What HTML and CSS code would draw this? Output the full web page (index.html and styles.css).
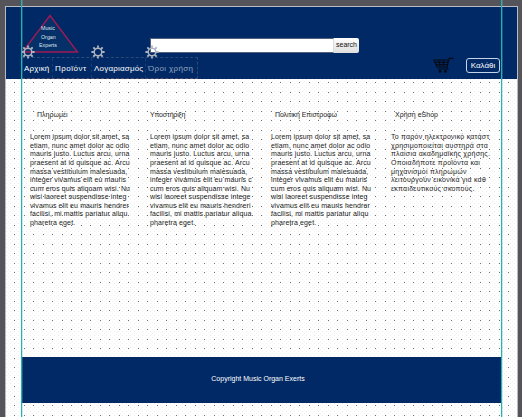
FILE: index.html
```html
<!DOCTYPE html>
<html lang="el">
<head>
<meta charset="utf-8">
<title>Music Organ Experts</title>
<link rel="stylesheet" href="styles.css">
</head>
<body>
<svg class="defs" width="0" height="0" aria-hidden="true">
  <symbol id="gear" viewBox="0 0 14 14">
    <circle cx="7" cy="7" r="3.8" fill="none" stroke="#aeb5c1" stroke-width="1.5"/>
    <path d="M7 .4V2.8M7 11.2V13.6M.4 7H2.8M11.2 7H13.6M2.3 2.3L4 4M10 10L11.7 11.7M11.7 2.3L10 4M4 10L2.3 11.7" stroke="#aeb5c1" stroke-width="1.8"/>
  </symbol>
</svg>
<div class="page">
  <header class="header">
    <div class="top">
      <div class="logo">
        <svg class="triangle" width="60" height="40" viewBox="0 0 60 40"><path d="M30 1.5L57.5 38H2.5Z" fill="#063168" stroke="#a01a55" stroke-width="1.4"/></svg>
        <div class="logo-text"><span>Music</span><span>Organ</span><span>Experts</span></div>
      </div>
      <div class="search"><div class="field"></div><div class="button"><span>search</span></div></div>
    </div>
    <div class="bottom">
      <nav class="menu">
        <div class="item home"><svg class="gear"><use href="#gear"/></svg><span>Αρχική</span></div>
        <div class="item products"><span>Προϊόντ</span></div>
        <div class="item account"><svg class="gear"><use href="#gear"/></svg><span>Λογαριασμός</span></div>
        <div class="item terms"><svg class="gear"><use href="#gear"/></svg><span>Όροι χρήση</span></div>
      </nav>
      <svg class="cart" width="22" height="17" viewBox="0 0 22 17"><path d="M1 3H15.5L14 10H4ZM2 5.3H15M3 7.6H14.5M6 3L7 10M10.5 3V10M14 10L16.2 1.3H20.5M14 10L14.8 12H5" fill="none" stroke="#050b18" stroke-width="1.2"/><circle cx="7" cy="14.3" r="1.5" fill="#050b18"/><circle cx="12.5" cy="14.3" r="1.5" fill="#050b18"/></svg>
      <div class="basket"><span>Καλάθι</span></div>
    </div>
  </header>
  <main class="columns">
    <section class="col one"><h2>Πληρωμέι</h2><p>Lorem ipsum dolor sit amet, sa<br>etiam, nunc amet dolor ac odio<br>mauris justo. Luctus arcu, urna<br>praesent at id quisque ac. Arcu<br>massa vestibulum malesuada,<br>integer vivamus elit eu mauris<br>cum eros quis aliquam wisi. Nu<br>wisi laoreet suspendisse integ<br>vivamus elit eu mauris hendrer<br>facilisi, mi mattis pariatur aliqu<br>pharetra eget.</p></section>
    <section class="col two"><h2>Υποστήριξη</h2><p>Lorem ipsum dolor sit amet, sa<br>etiam, nunc amet dolor ac odio<br>mauris justo. Luctus arcu, urna<br>praesent at id quisque ac. Arcu<br>massa vestibulum malesuada,<br>integer vivamus elit eu mauris c<br>cum eros quis aliquam wisi. Nu<br>wisi laoreet suspendisse intege<br>vivamus elit eu mauris hendreri<br>facilisi, mi mattis pariatur aliqua<br>pharetra eget.</p></section>
    <section class="col three"><h2>Πολιτική Επιστροφώ</h2><p>Lorem ipsum dolor sit amet, sa<br>etiam, nunc amet dolor ac odio<br>mauris justo. Luctus arcu, urna<br>praesent at id quisque ac. Arcu<br>massa vestibulum malesuada,<br>integer vivamus elit eu mauris<br>cum eros quis aliquam wisi. Nu<br>wisi laoreet suspendisse integ<br>vivamus elit eu mauris hendrer<br>facilisi, mi mattis pariatur aliqu<br>pharetra eget.</p></section>
    <section class="col four"><h2>Χρήση eShop</h2><p>Το παρόν ηλεκτρονικό κατάστ<br>χρησιμοποιείται αυστηρά στα<br>πλαίσια ακαδημαϊκής χρήσης.<br>Οποιαδήποτε προϊόντα και<br>μηχανισμοί πληρωμών<br>λειτουργούν εικονικά για καθ<br>εκπαιδευτικούς σκοπούς.</p></section>
  </main>
  <footer class="footer"><span>Copyright Music Organ Exerts</span></footer>
  <div class="guide left"></div>
  <div class="guide right"></div>
</div>
</body>
</html>
```
FILE: styles.css
```css
* { box-sizing: border-box; }
body {
  margin: 0;
  height: 417px;
  overflow: hidden;
  padding: 6px 4px 0 5px;
  background: #56545b;
  font-family: "Liberation Sans", Arial, sans-serif;
  font-size: 7px;
  color: #222;
}
.defs { position: absolute; }
.page {
  --dot: radial-gradient(circle at .5px .5px, #707070 .6px, transparent .8px);
  position: relative;
  height: 411px;
  border: solid #b9bcc4;
  border-width: 1px 1px 0;
  background:
    var(--dot) 8px 18px / 19px 19px,
    var(--dot) 18px 18px / 19px 19px,
    var(--dot) 8px 9px / 19px 19px,
    var(--dot) 18px 9px / 19px 19px,
    radial-gradient(circle at .5px .5px, #ededed .6px, transparent .8px) 0 0 / 4px 4px,
    radial-gradient(circle at .5px .5px, #f3f3f3 .6px, transparent .8px) 2px 2px / 4px 4px,
    #fff;
}
.header { height: 72px; background: #002965; }
.top { display: flex; height: 50px; padding-left: 14px; }
.logo { position: relative; width: 130px; padding-top: 7px; }
.triangle { display: block; }
.logo-text {
  position: absolute;
  left: 21px;
  top: 17px;
  display: flex;
  flex-direction: column;
  color: #dce5f0;
  font-size: 5.3px;
  line-height: 8.6px;
}
.logo-text span:nth-child(3) { margin-left: -2px; }
.search { display: flex; height: 15px; margin-top: 31px; }
.field { width: 184px; background: #fff; border: 1px solid #50627d; border-right-color: #ddd; }
.button {
  width: 25px;
  padding-left: 2px;
  border-radius: 0 2px 2px 0;
  background: linear-gradient(#fff, #dedede);
  color: #111;
  line-height: 14px;
}
.bottom { display: flex; height: 22px; padding-left: 16px; }
.menu {
  display: flex;
  width: 176px;
  border: 1px dashed #2c4a76;
  border-left: 0;
  border-bottom-color: #554d66;
  font-size: 8px;
  line-height: 22px;
  letter-spacing: .2px;
  color: #fff;
}
.item { position: relative; padding-left: 2px; border-right: 1px dashed #173d73; white-space: nowrap; }
.item:last-child { border-right: 0; }
.home { width: 31px; }
.products { width: 39px; letter-spacing: .5px; }
.account { width: 54px; }
.terms { width: 51px; color: #91a4bf; letter-spacing: .35px; }
.gear { position: absolute; left: -1px; top: -13px; width: 14px; height: 14px; }
.cart { margin: 0 0 0 235px; }
.basket {
  width: 34px;
  height: 15px;
  margin: 1px 0 0 11px;
  border: 1px solid #c3d4e8;
  border-radius: 3px;
  color: #fff;
  font-size: 8px;
  line-height: 14px;
  text-align: center;
}
.columns {
  display: grid;
  grid-template-columns: 120px 121px 120px 100px;
  height: 278px;
  padding: 30px 0 0 24px;
}
h2, p { margin: 0; white-space: nowrap; }
h2 { height: 12px; font-size: 7px; font-weight: 400; line-height: 12px; }
p { margin-top: 12.4px; line-height: 8.55px; letter-spacing: .12px; }
.one h2 { margin-left: 7px; }
.two h2 { letter-spacing: -.15px; }
.three h2, .four h2 { margin-left: 4px; }
.three h2 { letter-spacing: -.1px; }
.four p { letter-spacing: .25px; }
.footer {
  display: flex;
  align-items: center;
  justify-content: center;
  height: 46px;
  margin: 0 15px 0 16px;
  padding: 0 8px 3px 0;
  background: #002965;
  color: #fff;
}
.guide { position: absolute; top: -7px; bottom: 0; width: 1px; background: #20b2b4; box-shadow: .3px 0 0 #55c4c4; }
.guide.left { left: 15px; }
.guide.right { right: 15px; }
```
